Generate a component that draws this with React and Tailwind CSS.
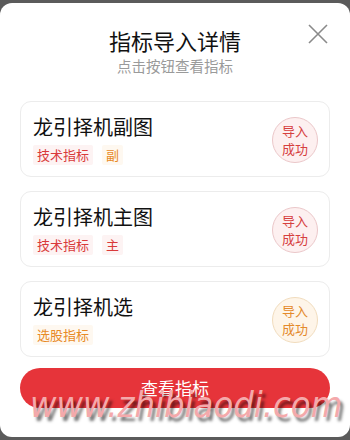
export default function App() {
  const items = [
    {
      name: '龙引择机副图',
      tags: [
        { label: '技术指标', tone: 'red' },
        { label: '副', tone: 'orange' },
      ],
      badge: 'red',
    },
    {
      name: '龙引择机主图',
      tags: [
        { label: '技术指标', tone: 'red' },
        { label: '主', tone: 'red' },
      ],
      badge: 'red',
    },
    {
      name: '龙引择机选',
      tags: [{ label: '选股指标', tone: 'orange' }],
      badge: 'orange',
    },
  ];

  return (
    <div
      className="relative w-[350px] h-[440px] bg-[#5b5b5b] pt-[3px] pb-[3px] overflow-hidden"
      style={{ fontFamily: '"Noto Sans CJK SC", "Noto Sans", sans-serif' }}
    >
      <div className="relative h-full bg-white rounded-[12px] px-5 pt-[22px]">
        <button className="absolute right-[21px] top-[20px] w-[22px] h-[22px] text-[#8a8a8a]">
          <svg viewBox="0 0 22 22" className="w-full h-full" fill="none" stroke="currentColor" strokeWidth="1.6">
            <path d="M2 2L20 20M20 2L2 20" />
          </svg>
        </button>

        <h1 className="text-center text-[22px] leading-[30px] text-[#111]">指标导入详情</h1>
        <p className="text-center text-[14.5px] leading-[20px] text-[#9a9a9a] mt-[1px]">点击按钮查看指标</p>

        <div className="mt-[25px] flex flex-col gap-[14px]">
          {items.map((item, i) => (
            <div
              key={i}
              className="h-[76px] rounded-[11px] border border-[#ececec] bg-white pl-[12px] pr-[11px] flex items-center justify-between"
            >
              <div className="flex flex-col">
                <div className="text-[20px] leading-[26px] text-[#111]">{item.name}</div>
                <div className="flex gap-[9px] mt-[5px]">
                  {item.tags.map((t, j) => (
                    <span
                      key={j}
                      className={
                        t.tone === 'red'
                          ? 'px-[4px] text-[13px] leading-[20px] text-[#d93a3a] bg-[#fdf3f3] rounded-[2px]'
                          : 'px-[4px] text-[13px] leading-[20px] text-[#e88a26] bg-[#fef8f0] rounded-[2px]'
                      }
                    >
                      {t.label}
                    </span>
                  ))}
                </div>
              </div>
              <div
                className={
                  item.badge === 'red'
                    ? 'mt-[2px] w-[46px] h-[46px] rounded-full border border-[#ebc7c9] bg-[#fdf0f0] text-[#d6403f] flex flex-col items-center justify-center text-[13px] leading-[18px]'
                    : 'mt-[2px] w-[46px] h-[46px] rounded-full border border-[#f1dcbd] bg-[#fef5e9] text-[#e48a2c] flex flex-col items-center justify-center text-[13px] leading-[18px]'
                }
              >
                <span>导入</span>
                <span>成功</span>
              </div>
            </div>
          ))}
        </div>

        <button className="mt-[11px] w-full h-[40px] rounded-full bg-[#e6343a] text-white text-[17px] leading-[24px]">
          查看指标
        </button>
      </div>

      <div
        className="absolute left-[30px] top-[383px] text-[36px] leading-[44px] italic text-[#f4a9ab] pointer-events-none whitespace-nowrap [text-shadow:3px_4px_3px_rgba(0,0,0,0.55)]"
        style={{ fontFamily: '"DejaVu Sans Condensed", "DejaVu Sans", sans-serif' }}
      >
        www.zhibiaodi.com
      </div>
    </div>
  );
}
